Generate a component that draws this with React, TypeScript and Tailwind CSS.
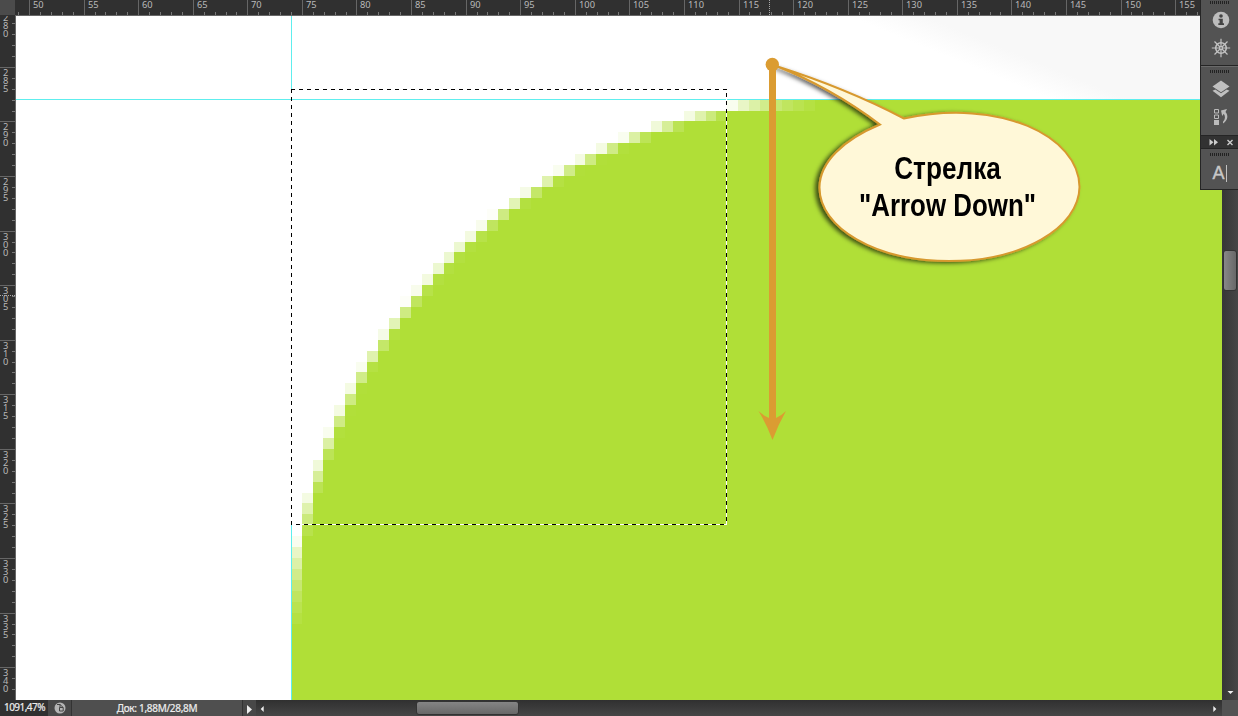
const STEP = 10.9147;
const xAt = (u: number) => 29.05 + (u - 50) * STEP;
const yAt = (v: number) => 66.88 + (v - 285) * STEP;
const cellX = (u: number) => Math.round(28.79 + (u - 50) * STEP) - 16;
const cellY = (v: number) => Math.round(yAt(v)) - 15;

type Cell = { x: number; y: number; w: number; h: number; a: number };

function coverage(cx: number, cy: number) {
  let n = 0;
  for (let i = 0; i < 8; i++)
    for (let j = 0; j < 8; j++) {
      const dx = 124 - (cx + (i + 0.5) / 8);
      const dy = 338 - (cy + (j + 0.5) / 8);
      if (dx * dx + dy * dy <= 2500) n++;
    }
  return n / 64;
}

function cornerCells() {
  const cells: Cell[] = [];
  for (let v = 288; v < 338; v++) {
    for (let u = 74; u < 124; u++) {
      const a = coverage(u, v);
      if (a > 0.99) continue;
      const x = cellX(u);
      const y = cellY(v);
      cells.push({ x, y, w: cellX(u + 1) - x, h: cellY(v + 1) - y, a: 1 - a });
    }
  }
  return cells;
}

const CELLS = cornerCells();
const range = (a: number, b: number) => Array.from({ length: b - a + 1 }, (_, i) => a + i);

function TopRuler() {
  return (
    <svg className="block h-4 w-[1222px] shrink-0 bg-[#303030]" viewBox="0 0 1222 16">
      <rect width="15" height="15" fill="#4b4b4b" />
      {range(49, 158).map((u) => (
        <rect key={u} x={Math.round(xAt(u))} y={u % 5 ? 12 : 0} width="1" height={u % 5 ? 3 : 15} fill={u % 5 ? "#777" : "#666"} />
      ))}
      {range(10, 31).map((n) => (
        <text key={n} x={Math.round(xAt(n * 5)) + 4} y="8" fontSize="9.3" fill="#b9b9b9" fontFamily="'Noto Sans', sans-serif">{n * 5}</text>
      ))}
      <path d="M769.5 0V15" stroke="#aaa" strokeDasharray="1 1" />
      <path d="M15 15.5H1222" stroke="#666" />
    </svg>
  );
}

function SideRuler() {
  return (
    <svg className="block h-[684px] w-4 shrink-0 bg-[#303030]" viewBox="0 16 16 684">
      {range(281, 342).map((v) => (
        <rect key={v} x={v % 5 ? 12 : 0} y={Math.round(yAt(v))} width={v % 5 ? 3 : 15} height="1" fill={v % 5 ? "#777" : "#666"} />
      ))}
      {range(56, 68).map((n) =>
        String(n * 5).split("").map((d, i) => (
          <text key={`${n}-${i}`} x="3" y={Math.round(yAt(n * 5)) + 9 + i * 8} fontSize="9.3" fill="#b9b9b9" fontFamily="'Noto Sans', sans-serif">{d}</text>
        ))
      )}
      <path d="M0 295.5H15" stroke="#aaa" strokeDasharray="1 1" />
      <path d="M15.5 16V700" stroke="#666" />
    </svg>
  );
}

function Artwork() {
  return (
    <svg className="block h-[684px] w-[1206px]" viewBox="0 1 1206 684">
      <defs>
        <linearGradient id="haze" gradientUnits="userSpaceOnUse" x1="964" y1="55" x2="975" y2="28">
          <stop offset="0" stopColor="#fff" />
          <stop offset="1" stopColor="#f8f8f8" />
        </linearGradient>
      </defs>
      <rect width="1206" height="685" fill="#fff" />
      <path d="M820 0H1206V85H820Z" fill="url(#haze)" />
      <g shapeRendering="crispEdges">
        <rect x="275" y="85" width="931" height="600" fill="#b0df37" />
        {CELLS.map((c, i) => (
          <rect key={i} x={c.x} y={c.y} width={c.w} height={c.h} fill="#fff" fillOpacity={c.a} />
        ))}
        <rect x="0" y="84" width="1206" height="1" fill="#5eeeee" />
        <rect x="275" y="0" width="1" height="75" fill="#5eeeee" />
        <rect x="275" y="509" width="1" height="176" fill="#5eeeee" />
      </g>
      <g fill="none" shapeRendering="crispEdges">
        <path d="M275 74.5H711M275.5 74V510M710.5 74V510M275 509.5H711" stroke="#fff" />
        <path d="M275 74.5H711M275.5 74V510M710.5 78V510" stroke="#000" strokeDasharray="4 4" />
        <path d="M280 509.5H711" stroke="#000" strokeDasharray="4 4" />
      </g>
    </svg>
  );
}

function Callout() {
  const shape = "M776 66C820 80 865 98 904 118.5C1000 98 1079 136 1079.5 187C1079 228 1022 261 949 261C876 261 819 228 819.5 187C820 162 843 140 880 124.5C850 102 817 82 776 66Z";
  return (
    <div className="absolute left-[740px] top-[40px] h-[410px] w-[360px]">
      <svg className="absolute inset-0 h-[410px] w-[360px]" viewBox="740 40 360 410">
        <defs>
          <filter id="drop" x="-10%" y="-10%" width="120%" height="120%">
            <feDropShadow dx="-3.5" dy="1.2" stdDeviation="2.2" floodColor="#000" floodOpacity=".65" />
          </filter>
        </defs>
        <path d={shape} fill="#fff8d8" stroke="#d7992f" strokeWidth="2" filter="url(#drop)" />
        <circle cx="772.3" cy="64.5" r="6.7" fill="#db9c32" />
        <path d="M769 64H776V418Q781 416 786 411Q778 425 772.5 440Q767 425 758.5 411Q764 416 769 418Z" fill="#db9c32" />
      </svg>
      <div className="absolute left-[78px] top-[110px] w-[259px] text-center font-['Liberation_Sans',Arial,sans-serif] text-[31px] font-bold leading-[37px] text-black">
        <div className="scale-x-[0.845]">Стрелка</div>
        <div className="scale-x-[0.835] whitespace-nowrap">"Arrow Down"</div>
      </div>
    </div>
  );
}

function Grip() {
  return (
    <svg className="block h-1 w-5" viewBox="0 0 20 4" shapeRendering="crispEdges">
      {range(0, 9).map((i) => (
        <rect key={i} x={i * 2} y="1" width="1" height="3" fill="#222" />
      ))}
    </svg>
  );
}

function InfoIcon() {
  return (
    <svg className="h-[18px] w-[18px]" viewBox="0 0 18 18">
      <circle cx="9" cy="9" r="8.3" fill="#bdbdbd" />
      <circle cx="9" cy="5" r="1.8" fill="#444" />
      <path d="M6.5 7.7H10.8V12.3H12V14H6.3V12.3H7.6V9.3H6.5Z" fill="#444" />
    </svg>
  );
}

function WheelIcon() {
  return (
    <svg className="h-5 w-5" viewBox="0 0 20 20" fill="none" stroke="#c2c2c2">
      <circle cx="10" cy="10" r="5.3" strokeWidth="1.6" />
      <path d="M10 .8V19.2M.8 10H19.2M3.5 3.5L16.5 16.5M16.5 3.5L3.5 16.5" strokeWidth="1.2" />
      <circle cx="10" cy="10" r="2" fill="#c2c2c2" stroke="none" />
      <circle cx="10" cy="10" r=".8" fill="#444" stroke="none" />
    </svg>
  );
}

function LayersIcon() {
  return (
    <svg className="h-[18px] w-[18px]" viewBox="0 0 18 18" fill="#c0c0c0">
      <path d="M9 .5L17.5 6.5L9 12.2L.5 6.5Z" />
      <path d="M.5 10.8L3.3 9.5L9 13.3L14.7 9.5L17.5 10.8L9 17.2Z" />
    </svg>
  );
}

function HistoryIcon() {
  return (
    <svg className="h-[18px] w-4" viewBox="0 0 16 18">
      <path d="M1.5 1.5H5.5V5H1.5ZM1.5 7H5.5V10.5H1.5Z" fill="none" stroke="#bbb" />
      <rect x="1" y="12" width="5" height="5" fill="#bbb" />
      <path d="M8 2.5L14 1L12.5 4C15.5 7.5 15 12 10 15.5V13.8C12.5 11 12.5 8.5 10.8 5.8L9.2 8Z" fill="#bbb" />
    </svg>
  );
}

function PanelDock() {
  return (
    <div className="absolute left-[1200px] top-0 flex h-[190px] w-[38px] flex-col border-b border-l border-[#252525] bg-[#535353]">
      <div className="flex h-[66px] flex-col items-center border-b border-[#252525]">
        <Grip />
        <div className="mt-[7px] pl-0.5"><InfoIcon /></div>
        <div className="mt-[9px] pl-0.5"><WheelIcon /></div>
      </div>
      <div className="flex h-[69px] flex-col items-center border-t border-[#6a6a6a] pt-[2px]">
        <Grip />
        <div className="mt-[7px] pl-0.5"><LayersIcon /></div>
        <div className="mt-[10px] pl-0.5"><HistoryIcon /></div>
      </div>
      <div className="flex h-[14px] items-center border-y border-[#252525] bg-[#323232]">
        <svg className="h-3 w-[37px]" viewBox="0 0 37 12">
          <path d="M8.5 3L12.5 6.2L8.5 9.5ZM13 3L17 6.2L13 9.5Z" fill="#ccc" />
          <path d="M26.5 4L31.5 9M31.5 4L26.5 9" stroke="#ccc" strokeWidth="1.4" />
        </svg>
      </div>
      <div className="flex flex-1 flex-col items-center pt-[3px]">
        <Grip />
        <div className="mt-[5px] flex items-center font-['Liberation_Sans',Arial,sans-serif] text-[18px] leading-[24px] text-[#c8c8c8] [-webkit-text-stroke:0.4px_#c8c8c8]">
          A<span className="ml-px h-[17px] w-px bg-[#c2c2c2]" />
        </div>
      </div>
    </div>
  );
}

function VerticalScroll() {
  return (
    <div className="flex h-[700px] w-4 shrink-0 flex-col items-center bg-linear-to-r from-[#363636] to-[#464646] pt-[250px]">
      <div className="h-[41px] w-[14px] rounded-[3px] border border-[#333] bg-linear-to-r from-[#888] to-[#686868]" />
      <svg className="mt-auto mb-[5px] h-[4px] w-[7px]" viewBox="0 0 7 4"><path d="M.5 0H6.5L3.5 3Z" fill="#eee" /></svg>
    </div>
  );
}

function StatusBar() {
  return (
    <div className="flex h-4 w-[1238px] font-['Noto_Sans',sans-serif] text-[#eee]">
      <div className="w-12 whitespace-nowrap bg-[#303030] pl-1 text-[10px] leading-[15px] tracking-[-0.55px] [-webkit-text-stroke:0.2px_#eee]">1091,47%</div>
      <div className="flex w-6 items-center justify-center border-r border-[#333] bg-[#484848]">
        <svg className="h-3 w-3" viewBox="0 0 12 12">
          <circle cx="6" cy="6" r="5.5" fill="#b5b5b5" />
          <path d="M3 2.5H6V5.5M6 2.5L9.2 5.5V9H5.5V5.5H9.2" fill="none" stroke="#444" />
        </svg>
      </div>
      <div className="w-[170px] bg-[#4f4f4f] text-center text-[10px] leading-4 tracking-[-0.3px] [-webkit-text-stroke:0.2px_#eee]">Док: 1,88M/28,8M</div>
      <div className="flex w-[14px] items-center justify-center border-l border-[#333] bg-[#484848]">
        <svg className="mt-0.5 h-[9px] w-[5px]" viewBox="0 0 5 9"><path d="M0 0L5 4.5L0 9Z" fill="#eee" /></svg>
      </div>
      <div className="flex flex-1 items-center bg-linear-to-b from-[#303030] to-[#464646] pl-[4px] pr-[5px]">
        <svg className="mt-0.5 h-[6px] w-1" viewBox="0 0 4 7"><path d="M4 0V7L.5 3.5Z" fill="#eee" /></svg>
        <div className="ml-[152px] h-[14px] w-[103px] rounded-[3px] border border-[#333] bg-linear-to-b from-[#858585] to-[#686868]" />
        <svg className="mt-0.5 ml-auto h-[6px] w-1" viewBox="0 0 4 7"><path d="M0 0V7L3.5 3.5Z" fill="#eee" /></svg>
      </div>
      <div className="w-4 bg-[#535353]" />
    </div>
  );
}

export default function App() {
  return (
    <div className="relative flex h-[716px] w-[1238px] flex-col overflow-hidden bg-[#303030]">
      <div className="flex h-[700px]">
        <div className="flex w-[1222px] flex-col">
          <TopRuler />
          <div className="flex h-[684px]">
            <SideRuler />
            <Artwork />
          </div>
        </div>
        <VerticalScroll />
      </div>
      <StatusBar />
      <Callout />
      <PanelDock />
    </div>
  );
}
